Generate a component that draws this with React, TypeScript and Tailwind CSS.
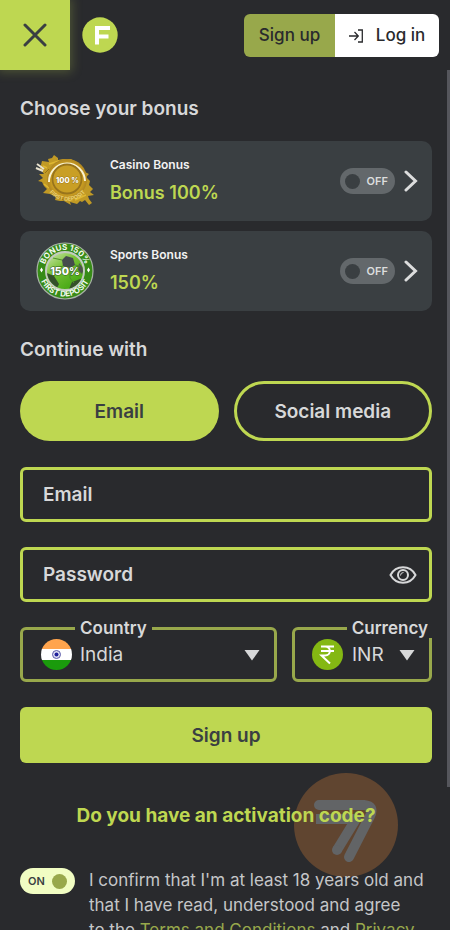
import type { ReactNode } from 'react'

type ToggleProps = {
    label: string
    defaultChecked?: boolean
}

const Toggle = ({ label, defaultChecked }: ToggleProps) => {
    return (
        <label className="group relative flex h-[26px] w-[55px] shrink-0 cursor-pointer items-center justify-between rounded-full bg-[#63686b] px-[5px] has-checked:flex-row-reverse has-checked:bg-[#f1fdc3] has-checked:px-[8px]">
            <input type="checkbox" role="switch" aria-label={label} defaultChecked={defaultChecked} className="peer sr-only" />
            <span className="size-[15px] rounded-full bg-[#3a3f42] peer-checked:bg-[#98a84b]"></span>
            <span className="pr-[2px] text-[11px] font-semibold text-[#dcdddd] group-has-checked:hidden">OFF</span>
            <span className="hidden text-[11px] font-semibold text-[#3a3f42] group-has-checked:block">ON</span>
        </label>
    )
}

const CasinoBadge = () => {
    return (
        <svg viewBox="0 0 60 60" className="size-[60px]" aria-hidden="true">
            <defs>
                <radialGradient id="gold">
                    <stop offset="0" stopColor="#cfa428" />
                    <stop offset="0.8" stopColor="#c89c22" />
                    <stop offset="1" stopColor="#b08620" />
                </radialGradient>
                <path id="casinoArc" d="M11 35 A 23 23 0 0 0 54 35" />
            </defs>
            <path d="M7 10 L14 11 L13 8 L17 7 L19 4 L23 7 L23 9 L28 8 L36 8 L42 11 L43 15 L49 18 L48 20 L54 23 L51 26 L55 30 L54 34 L58 38 L55 41 L59 44 L53 45 L54 48 L57 52 L54 54 L50 49 L47 51 L45 50 L42 53 L35 51 L36 54 L29 50 L25 50 L20 49 L21 46 L15 43 L8 42 L12 38 L9 35 L7 31 L3 30 L8 27 L4 23 L9 23 L5 18 Z" fill="#c19a25" />
            <path d="M2 13 L9 18 M1 17 L8 20" stroke="#e9e3cf" strokeWidth="2" />
            <path d="M14 13 L24 10 M8 15 L12 17 M40 12 L45 17 M40 49 L51 44 M9 33 L14 37" stroke="#e0b832" strokeWidth="1.5" />
            <path d="M10 22 L14 18 M49 23 L52 29 M23 47 L31 50" stroke="#967216" strokeWidth="1" />
            <circle cx="32" cy="28" r="20" fill="url(#gold)" />
            <path d="M14 31 A 18 18 0 1 1 50 30" fill="none" stroke="#faf3d2" strokeWidth="2" />
            <circle cx="32" cy="28" r="14.5" fill="#c99f25" stroke="#98741c" strokeWidth="1.8" />
            <text x="32.5" y="32" textAnchor="middle" fontSize="7.5" fontWeight="800" fill="#fff" stroke="#96741c" strokeWidth="0.8" paintOrder="stroke">100 %</text>
            <text fontSize="5.5" fontWeight="700" fill="#ead071">
                <textPath href="#casinoArc" startOffset="50%" textAnchor="middle">FIRST DEPOSIT</textPath>
            </text>
        </svg>
    )
}

const SportsBadge = () => {
    return (
        <svg viewBox="0 0 60 60" className="size-[60px]" aria-hidden="true">
            <defs>
                <clipPath id="ballClip">
                    <circle cx="30" cy="30" r="18" />
                </clipPath>
                <linearGradient id="ballFill" x2="0.7" y2="1">
                    <stop offset="0" stopColor="#d5e9bb" />
                    <stop offset="0.45" stopColor="#79c236" />
                    <stop offset="1" stopColor="#40a510" />
                </linearGradient>
                <path id="sportsTop" d="M9 30 A 21 21 0 0 1 51 30" />
                <path id="sportsBottom" d="M3.5 29 A 26.5 26.5 0 0 0 56.5 29" />
            </defs>
            <circle cx="30" cy="30" r="28" fill="#378b17" stroke="#a7b2a5" strokeWidth="1.2" />
            <circle cx="30" cy="30" r="19" fill="url(#ballFill)" stroke="#c3cbbf" strokeWidth="2" />
            <g clipPath="url(#ballClip)">
                <path d="M27 19 L31 15 L38 17 L40 24 L35 27 L28 25 Z" fill="#454c4c" />
                <path d="M12 32 L19 35 L24 43 L21 49 L12 44 Z" fill="#35502b" />
                <path d="M37 41 L48 37 L45 48 L34 48 Z" fill="#35502b" />
                <path d="M44 22 L49 28 L47 33 L43 29 Z" fill="#4d554b" />
                <path d="M28 25 L18 29 L19 35 M35 27 L35 37 L39 42 M40 24 L45 25 M27 19 L18 17" fill="none" stroke="#4d9128" strokeWidth="1" />
            </g>
            <path d="M6.5 26.5 L8 29 L6.5 31.5 L5 29 Z M53.5 26.5 L55 29 L53.5 31.5 L52 29 Z" fill="#fff" />
            <text fontSize="8" fontWeight="700" fill="#f4faf1">
                <textPath href="#sportsTop" startOffset="50%" textAnchor="middle">BONUS 150%</textPath>
            </text>
            <text fontSize="8" fontWeight="700" fill="#f4faf1">
                <textPath href="#sportsBottom" startOffset="50%" textAnchor="middle">FIRST DEPOSIT</textPath>
            </text>
            <text x="30" y="34" textAnchor="middle" fontSize="10.5" fontWeight="800" fill="#fff" stroke="#315c20" strokeWidth="1" paintOrder="stroke">150%</text>
        </svg>
    )
}

type BonusCardProps = {
    title: string
    amount: string
    badge: ReactNode
}

const BonusCard = ({ title, amount, badge }: BonusCardProps) => {
    return (
        <li className="flex h-20 items-center rounded-[10px] bg-[#3a3f42] pr-[14px] pl-[15px]">
            {badge}
            <div className="ml-[15px] flex-1">
                <h3 className="text-[12px] leading-4 font-semibold text-[#f2f2f2]">{title}</h3>
                <p className="mt-2 text-[18px] leading-6 font-semibold text-[#bed751]">{amount}</p>
            </div>
            <Toggle label={title} />
            <button type="button" aria-label={`${title} details`} className="ml-[9px]">
                <svg viewBox="0 0 14 22" className="h-[22px] w-[14px]" fill="none" stroke="#dcdddd" strokeWidth="3" strokeLinecap="round">
                    <path d="M2 2 L11.5 11 L2 20" />
                </svg>
            </button>
        </li>
    )
}

const Arrow = () => {
    return (
        <svg viewBox="0 0 16 12" className="pointer-events-none h-3 w-4 shrink-0" aria-hidden="true">
            <path d="M0.5 1 H15.5 L8 11.5 Z" fill="#d7d8d9" />
        </svg>
    )
}

const App = () => {
    return (
        <div className="flex h-screen flex-col overflow-hidden bg-[#292a2d] font-['Inter',sans-serif] text-[#d7d8d9]">
            <header className="flex h-[70px] shrink-0 items-center pr-[11px]">
                <button type="button" aria-label="Close" className="flex size-[70px] items-center justify-center bg-[#bed751] shadow-[0_0_10px_2px_#bed75140]">
                    <svg viewBox="0 0 24 24" className="size-6" fill="none" stroke="#3a3f42" strokeWidth="3" strokeLinecap="round">
                        <path d="M2 2 L22 22 M22 2 L2 22" />
                    </svg>
                </button>
                <a href="#home" aria-label="Home" className="ml-3">
                    <svg viewBox="0 0 36 36" className="size-9">
                        <circle cx="18" cy="18" r="17.7" fill="#bed751" />
                        <path d="M15 27.5 V11 H28 M15 19.5 H26.5" fill="none" stroke="#fff" strokeWidth="4" />
                    </svg>
                </a>
                <div className="ml-auto flex h-[43px] overflow-hidden rounded-md text-[17px] font-medium text-[#292a2d]">
                    <button type="button" className="w-[91px] bg-[#98a84b] pt-[2px]">Sign up</button>
                    <button type="button" className="flex w-[104px] items-center justify-center gap-3 bg-white pt-[2px]">
                        <svg viewBox="0 0 15 14" className="h-[14px] w-[15px]" fill="none" stroke="#292a2d" strokeWidth="1.3">
                            <path d="M0 7 H9 M5.5 3 L9.3 7 L5.5 11 M9 1 H13.3 V13 H9" />
                        </svg>
                        Log in
                    </button>
                </div>
            </header>
            <div className="relative min-h-0 flex-1">
                <main className="h-full overflow-y-auto pr-[18px] pl-5 pt-[27px] [scrollbar-width:none]">
                    <h2 className="text-[19px] leading-6 font-semibold">Choose your bonus</h2>
                    <ul className="mt-5 space-y-[10px]">
                        <BonusCard title="Casino Bonus" amount="Bonus 100%" badge={<CasinoBadge />} />
                        <BonusCard title="Sports Bonus" amount="150%" badge={<SportsBadge />} />
                    </ul>
                    <h2 className="mt-[27px] text-[19px] leading-6 font-semibold">Continue with</h2>
                    <div className="mt-[19px] grid grid-cols-2 gap-[15px] text-[19px] font-semibold">
                        <button type="button" className="h-[60px] rounded-full bg-[#bed751] pt-[2px] text-[#3a3f42]">Email</button>
                        <button type="button" className="h-[60px] rounded-full border-[3px] border-[#bed751] pt-[2px]">Social media</button>
                    </div>
                    <form className="mt-[26px] space-y-[25px]">
                        <input type="email" aria-label="Email" placeholder="Email" className="block h-[55px] w-full rounded-md border-[3px] border-[#bed751] bg-transparent px-5 text-[19px] font-semibold placeholder:text-[#d7d8d9]" />
                        <div className="flex h-[55px] items-center rounded-md border-[3px] border-[#bed751] pr-3 pl-5">
                            <input type="password" aria-label="Password" placeholder="Password" className="min-w-0 flex-1 bg-transparent pt-[2px] text-[19px] font-semibold placeholder:text-[#d7d8d9]" />
                            <button type="button" aria-label="Show password">
                                <svg viewBox="0 0 28 18" className="h-[18px] w-7" fill="none" stroke="#d7d8d9" strokeWidth="2">
                                    <path d="M1.5 9 C7 -1.2 21 -1.2 26.5 9 C21 19.2 7 19.2 1.5 9 Z" />
                                    <circle cx="14" cy="9" r="5" />
                                    <path d="M11.5 9.5 Q11.5 6.5 14.5 6.5" strokeWidth="1" />
                                </svg>
                            </button>
                        </div>
                        <div className="flex gap-[15px]">
                            <div className="relative flex h-[55px] min-w-0 flex-1 items-center rounded-md border-[3px] border-[#98a84b] pr-[14px] pl-[18px]">
                                <label htmlFor="country" className="absolute -top-3 left-[52px] bg-[#292a2d] px-[5px] text-[17px] leading-5 font-semibold">Country</label>
                                <svg viewBox="0 0 31 31" className="size-[31px] shrink-0" aria-hidden="true">
                                    <defs>
                                        <clipPath id="flagClip">
                                            <circle cx="15.5" cy="15.5" r="15.5" />
                                        </clipPath>
                                    </defs>
                                    <g clipPath="url(#flagClip)">
                                        <path d="M0 0 H31 V10 H0 Z" fill="#ffa44d" />
                                        <path d="M0 10 H31 V21 H0 Z" fill="#fff" />
                                        <path d="M0 21 H31 V31 H0 Z" fill="#1a9b0c" />
                                    </g>
                                    <circle cx="15.5" cy="15.5" r="4" fill="#dfdff2" stroke="#5c5caa" strokeWidth="1" />
                                    <circle cx="15.5" cy="15.5" r="2" fill="#20209b" />
                                </svg>
                                <select id="country" className="ml-2 min-w-0 flex-1 appearance-none bg-transparent pt-[2px] text-[19px]">
                                    <option>India</option>
                                </select>
                                <Arrow />
                            </div>
                            <div className="relative flex h-[55px] w-[140px] items-center rounded-md border-[3px] border-[#98a84b] pr-[14px] pl-[17px]">
                                <label htmlFor="currency" className="absolute -top-3 -right-1 bg-[#292a2d] px-[5px] text-[17px] leading-5 font-semibold">Currency</label>
                                <svg viewBox="0 0 31 31" className="size-[31px] shrink-0" aria-hidden="true">
                                    <circle cx="15.5" cy="15.5" r="15.5" fill="#84b813" />
                                    <path d="M9 7.5 H22 M9 12 H22 M9 7.5 H13 C19.5 7.5 19.5 16.5 13 16.5 H9.5 L18 24.5" fill="none" stroke="#fff" strokeWidth="2" />
                                </svg>
                                <select id="currency" className="ml-[9px] min-w-0 flex-1 appearance-none bg-transparent pt-[2px] text-[19px]">
                                    <option>INR</option>
                                </select>
                                <Arrow />
                            </div>
                        </div>
                        <button type="submit" className="h-14 w-full rounded-md bg-[#bed751] pt-[2px] text-[19px] font-semibold text-[#3a3f42]">Sign up</button>
                        <div className="relative mt-4 text-center">
                            <svg viewBox="0 0 104 104" className="pointer-events-none absolute -top-[31px] right-[34px] size-[104px]" aria-hidden="true">
                                <circle cx="52" cy="52" r="52" fill="#604530" />
                                <path d="M25 32 H70 Q81 33 76 43 L55 84" fill="none" stroke="#626466" strokeWidth="10" strokeLinecap="round" />
                                <path d="M22 46 H62 L43 77" fill="none" stroke="#626466" strokeWidth="10" strokeLinejoin="round" />
                                <circle cx="43" cy="77" r="5" fill="#626466" />
                            </svg>
                            <a href="#activation" className="relative text-[19px] leading-6 font-bold text-[#bed751]">Do you have an activation code?</a>
                        </div>
                        <div className="relative mt-10 flex items-start gap-[14px]">
                            <Toggle label="I confirm that I'm at least 18 years old" defaultChecked />
                            <p className="flex-1 text-[17px] leading-[25px] text-[#c5c6c8]">
                                I confirm that I'm at least 18 years old and that I have read, understood and agree<br />
                                to the <a href="#terms" className="text-[#98a84b]">Terms and Conditions</a> and{' '}
                                <a href="#privacy" className="text-[#98a84b]">Privacy</a>
                            </p>
                        </div>
                    </form>
                </main>
                <div className="absolute top-0 right-0 h-5/6 w-[3px] bg-[#55565c]"></div>
            </div>
        </div>
    )
}

export default App
